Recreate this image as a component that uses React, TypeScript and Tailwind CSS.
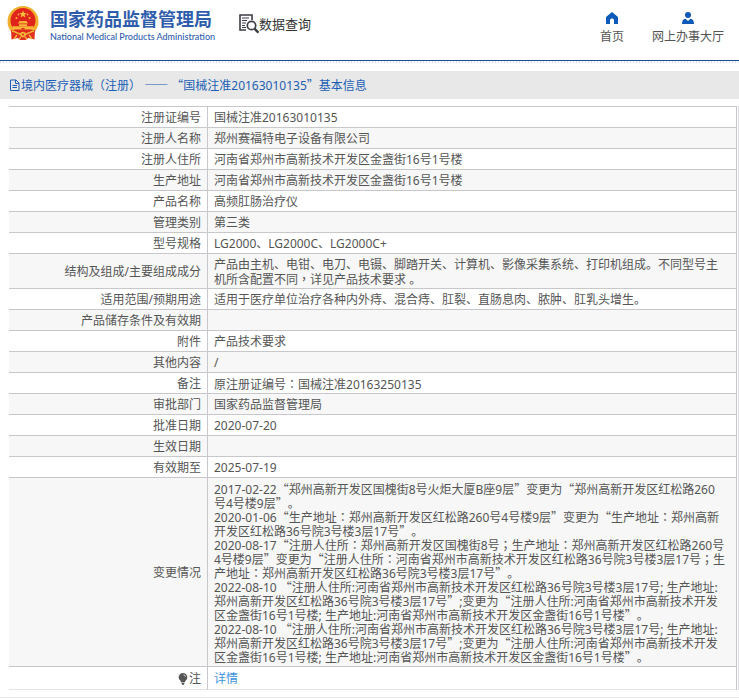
import { ReactNode } from "react";

type Row = {
  label: string;
  lines: string[];
};

const rows: Row[] = [
  { label: "注册证编号", lines: ["国械注准20163010135"] },
  { label: "注册人名称", lines: ["郑州赛福特电子设备有限公司"] },
  { label: "注册人住所", lines: ["河南省郑州市高新技术开发区金盏街16号1号楼"] },
  { label: "生产地址", lines: ["河南省郑州市高新技术开发区金盏街16号1号楼"] },
  { label: "产品名称", lines: ["高频肛肠治疗仪"] },
  { label: "管理类别", lines: ["第三类"] },
  { label: "型号规格", lines: ["LG2000、LG2000C、LG2000C+"] },
  {
    label: "结构及组成/主要组成成分",
    lines: [
      "产品由主机、电钳、电刀、电镊、脚踏开关、计算机、影像采集系统、打印机组成。不同型号主",
      "机所含配置不同，详见产品技术要求 。",
    ],
  },
  {
    label: "适用范围/预期用途",
    lines: ["适用于医疗单位治疗各种内外痔、混合痔、肛裂、直肠息肉、脓肿、肛乳头增生。"],
  },
  { label: "产品储存条件及有效期", lines: [] },
  { label: "附件", lines: ["产品技术要求"] },
  { label: "其他内容", lines: ["/"] },
  { label: "备注", lines: ["原注册证编号：国械注准20163250135"] },
  { label: "审批部门", lines: ["国家药品监督管理局"] },
  { label: "批准日期", lines: ["2020-07-20"] },
  { label: "生效日期", lines: [] },
  { label: "有效期至", lines: ["2025-07-19"] },
  {
    label: "变更情况",
    lines: [
      "2017-02-22“郑州高新开发区国槐街8号火炬大厦B座9层”变更为“郑州高新开发区红松路260",
      "号4号楼9层”。",
      "2020-01-06“生产地址：郑州高新开发区红松路260号4号楼9层”变更为“生产地址：郑州高新",
      "开发区红松路36号院3号楼3层17号”。",
      "2020-08-17“注册人住所：郑州高新开发区国槐街8号；生产地址：郑州高新开发区红松路260号",
      "4号楼9层”变更为“注册人住所：河南省郑州市高新技术开发区红松路36号院3号楼3层17号；生",
      "产地址：郑州高新开发区红松路36号院3号楼3层17号”。",
      "2022-08-10 “注册人住所:河南省郑州市高新技术开发区红松路36号院3号楼3层17号; 生产地址:",
      "郑州高新开发区红松路36号院3号楼3层17号”;变更为“注册人住所:河南省郑州市高新技术开发",
      "区金盏街16号1号楼; 生产地址:河南省郑州市高新技术开发区金盏街16号1号楼”。",
      "2022-08-10 “注册人住所:河南省郑州市高新技术开发区红松路36号院3号楼3层17号; 生产地址:",
      "郑州高新开发区红松路36号院3号楼3层17号”;变更为“注册人住所:河南省郑州市高新技术开发",
      "区金盏街16号1号楼; 生产地址:河南省郑州市高新技术开发区金盏街16号1号楼”。",
    ],
  },
];

// Quotes are set full width, colons and commas centred in their square
const CjkText = ({ children }: { children: string }) => (
  <>
    {children.split(/([“”—]+|[：；，])/).map((part, i) => {
      if (/^[“”—]/.test(part)) {
        return (
          <span key={i} className="font-['Noto_Sans_CJK_SC',sans-serif]">
            {part}
          </span>
        );
      }
      if (/^[：；，]/.test(part)) {
        return (
          <span key={i} lang="zh-TW" className="font-['Noto_Sans_CJK_TC',sans-serif]">
            {part}
          </span>
        );
      }
      return part;
    })}
  </>
);

const Emblem = () => (
  <svg className="h-[35px] w-8 shrink-0" viewBox="0 0 32 35" aria-hidden="true">
    <circle cx="16" cy="15.5" r="15.5" fill="#f0b02c" />
    <path d="M4 24h24l-.5 9.500-6-1.500-3 2h-5l-3-2-6 1.500z" fill="#e0301f" />
    <circle cx="16" cy="14.500" r="12.500" fill="#e0241b" />
    <path d="m16 4.500 1 2.600h2.800l-2.200 1.700.8 2.700-2.400-1.600-2.400 1.600.8-2.700-2.200-1.700H15z" fill="#fbc23a" />
    <g fill="#f8b53a">
      <circle cx="9.500" cy="12" r="1" />
      <circle cx="11.500" cy="8.500" r=".9" />
      <circle cx="20.500" cy="8.500" r=".9" />
      <circle cx="22.500" cy="12" r="1" />
      <path d="M11 17.500 12.500 15h7l1.500 2.500zM12 18.200h8V20h-8zM5.500 20.300h21v3.200h-21z" />
    </g>
    <path d="M14.500 23.500V22h3v1.500" fill="#e0241b" />
    <path d="M5 25c4 .5 6 3.500 11 3.500S23 25.500 27 25" stroke="#f6b93a" strokeWidth="1.300" fill="none" />
    <circle cx="16" cy="28.500" r="2.800" fill="#f6b93a" />
    <circle cx="16" cy="28.500" r="1.100" fill="#e0301f" />
    <path d="M7 33l3-4M25 33l-3-4M12 33l2-2M20 33l-2-2" stroke="#f6b93a" strokeWidth="1.300" fill="none" />
  </svg>
);

const QueryIcon = () => (
  <svg className="h-5 w-5 shrink-0" viewBox="0 0 20 20" fill="none" stroke="#3d3d46" aria-hidden="true">
    <path d="M7 16H1V1h12v5" strokeWidth="1.600" />
    <path d="M3 4h7M3 6.500h5M3 9h4M3 11.500h3M3 13.500h4" strokeWidth="1.100" />
    <circle cx="12.500" cy="11.500" r="4.200" strokeWidth="1.700" fill="#fff" />
    <path d="m15.500 14.700 4 4" strokeWidth="2.400" />
  </svg>
);

const HomeIcon = () => (
  <svg className="h-3 w-3" viewBox="0 0 12 12" fill="#0d5ab8" aria-hidden="true">
    <path d="M6 0 0 5v7h4V8.500c0-2.600 4-2.600 4 0V12h4V5z" />
  </svg>
);

const UserIcon = () => (
  <svg className="h-3 w-3" viewBox="0 0 12 12" fill="#0d5ab8" aria-hidden="true">
    <circle cx="6" cy="3" r="3" />
    <path d="M0 12c0-3 1-5 3.500-5.200L6 9l2.500-2.200C11 7 12 9 12 12z" />
  </svg>
);

const FileIcon = () => (
  <svg className="h-3 w-3 shrink-0" viewBox="0 0 12 12" fill="none" stroke="#1c5fb5" aria-hidden="true">
    <path d="M1.500 1h5.500l3 3v7.500H1.500zM6.500 1v3.500H10M3.500 6.500h4.500M3.500 8.500h4.500" />
  </svg>
);

const BulbIcon = () => (
  <svg className="h-3 w-[10px] shrink-0" viewBox="0 0 10 12" fill="#555" aria-hidden="true">
    <path d="M5 0a4.300 4.300 0 0 1 2.500 7.800L7 9H3l-.5-1.200A4.300 4.300 0 0 1 5 0zM3.500 9.500h3v1l-1 1.500h-1l-1-1.500z" />
    <path d="M5.500 1.800c1.200.2 1.800 1 2 2" stroke="#fff" strokeWidth=".8" fill="none" />
  </svg>
);

const NavLink = ({ icon, children }: { icon: ReactNode; children: string }) => (
  <a href="#" className="flex flex-col items-center gap-[5px] text-[#555]">
    {icon}
    <span className="leading-4">{children}</span>
  </a>
);

const Header = () => (
  <header className="border-b border-[#1c4f93]">
    <div className="flex h-[60px] items-start justify-between pl-[7px] pr-[15px]">
      <div className="flex items-start">
        <div className="flex gap-[11px] pt-[6px]">
          <Emblem />
          <div className="flex flex-col pt-1 text-[#2f5dab]">
            <span className="text-lg leading-[18px] font-bold">国家药品监督管理局</span>
            <span className="pt-[3px] font-[Lato,sans-serif] text-[9px] leading-3 font-medium">
              National Medical Products Administration
            </span>
          </div>
        </div>
        <div className="flex items-center pt-[14px] pl-6 text-[13px] leading-5 text-[#333]">
          <QueryIcon />
          数据查询
        </div>
      </div>
      <nav className="flex gap-7 pt-3">
        <NavLink icon={<HomeIcon />}>首页</NavLink>
        <NavLink icon={<UserIcon />}>网上办事大厅</NavLink>
      </nav>
    </div>
  </header>
);

export default function App() {
  return (
    <div
      lang="zh-CN"
      className="bg-white font-['Noto_Sans','Noto_Sans_CJK_SC',sans-serif] text-xs text-[#555] [text-spacing-trim:space-all]"
    >
      <Header />
      <div className="h-[2px] bg-[repeating-linear-gradient(90deg,#d5e3f2_0_1px,#fff_1px_3px)]" />
      <h1 className="mt-2 flex h-7 items-center bg-[#e8e8e8] pl-[9px] text-[#1c5fb5]">
        <FileIcon />
        <span className="whitespace-pre">
          <CjkText>境内医疗器械（注册） —— “国械注准20163010135”基本信息</CjkText>
        </span>
      </h1>
      <div className="mt-[7px] ml-[9px] border-r border-[#dedee2] pr-px">
        <table className="w-full border-separate border-spacing-0 border-t border-r border-[#c8c8cc] leading-[14px]">
          <tbody>
            {rows.map((row) => (
              <tr key={row.label} className="even:bg-[#f7f7f7]">
                <th
                  scope="row"
                  className="w-[199px] border-r border-b border-[#c8c8cc] px-[6px] pt-1 pb-[2px] text-right font-normal"
                >
                  {row.label}
                </th>
                <td className="border-b border-[#c8c8cc] px-[6px] pt-1 pb-[2px] whitespace-nowrap">
                  {row.lines.map((line, i) => (
                    <div key={i} className="h-[14px]">
                      <CjkText>{line}</CjkText>
                    </div>
                  ))}
                </td>
              </tr>
            ))}
            <tr>
              <th
                scope="row"
                className="border-r border-b border-r-[#c8c8cc] border-b-[#e4e4e4] px-[6px] pt-[5px] pb-[3px] font-normal"
              >
                <span className="flex items-center justify-end gap-px">
                  <BulbIcon />注
                </span>
              </th>
              <td className="border-b border-[#e4e4e4] px-[6px] pt-[5px] pb-[3px]">
                <a href="#" className="text-[#3d94e0]">
                  详情
                </a>
              </td>
            </tr>
          </tbody>
        </table>
      </div>
      <div className="mt-[7px] border-b border-[#e8e8e8]" />
    </div>
  );
}
